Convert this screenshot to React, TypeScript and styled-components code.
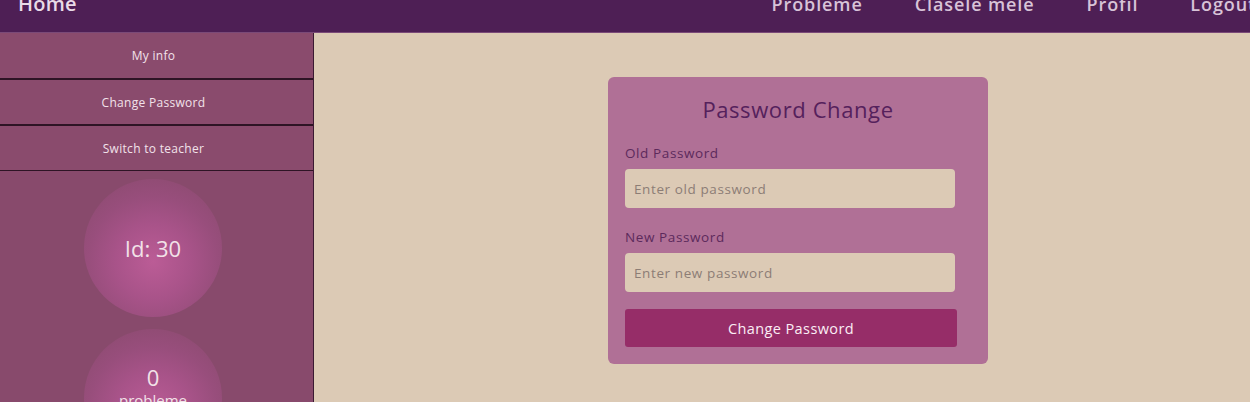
import React from "react";
import styled, { createGlobalStyle } from "styled-components";

const Global = createGlobalStyle`
  html, body { margin: 0; padding: 0; }
  body {
    font-family: "Open Sans", "DejaVu Sans", sans-serif;
    background: #dccab5;
    overflow: hidden;
  }
  * { box-sizing: border-box; }
`;

const Page = styled.div`
  width: 1250px;
  height: 402px;
  display: flex;
  flex-direction: column;
  background: #dccab5;
`;

const Header = styled.header`
  height: 33px;
  flex: none;
  display: flex;
  align-items: center;
  padding: 0 0 24px 18px;
  background: #4e1f55;
  border-bottom: 1px solid #7b4a78;
`;

const Brand = styled.span`
  font-size: 20px;
  font-weight: 600;
  line-height: 24px;
  color: #e9dbe8;
  letter-spacing: 0.2px;
`;

const Nav = styled.nav`
  margin-left: auto;
  display: flex;
  gap: 52px;
  margin-right: -6px;
`;

const NavLink = styled.span`
  font-size: 18px;
  font-weight: 600;
  line-height: 24px;
  color: #d8c3d8;
  letter-spacing: 0.9px;
`;

const Body = styled.div`
  flex: 1;
  display: flex;
  min-height: 0;
`;

const Sidebar = styled.aside`
  width: 314px;
  flex: none;
  background: #884a6c;
  border-right: 1px solid #3b1a33;
  display: flex;
  flex-direction: column;
  overflow: hidden;
`;

const SideButton = styled.div<{ $first?: boolean }>`
  height: 46px;
  flex: none;
  display: flex;
  align-items: center;
  justify-content: center;
  background: #8a4b6d;
  border-bottom: 1px solid #2e1425;
  border-top: ${(p) => (p.$first ? "none" : "1px solid #2e1425")};
  font-size: 12px;
  letter-spacing: 0.3px;
  color: #f2e2ea;
  padding-right: 6px;
`;

const Stats = styled.div`
  display: flex;
  flex-direction: column;
  align-items: center;
  gap: 12px;
  padding-top: 8px;
  padding-right: 7px;
`;

const Bubble = styled.div<{ $pb?: number }>`
  width: 138px;
  height: 138px;
  flex: none;
  border-radius: 50%;
  background: radial-gradient(
    circle at 50% 60%,
    #bb5c96 0%,
    #a85389 35%,
    #984e7c 60%,
    #8d4b71 85%,
    #884a6c 100%
  );
  display: flex;
  flex-direction: column;
  align-items: center;
  justify-content: center;
  padding-bottom: ${(p) => p.$pb ?? 0}px;
  color: #f2e2e8;
`;

const BubbleValue = styled.div`
  font-size: 22px;
  font-weight: 500;
  line-height: 28px;
`;

const BubbleLabel = styled.div`
  font-size: 15px;
  line-height: 18px;
`;

const Main = styled.main`
  flex: 1;
  padding: 44px 0 0 294px;
`;

const Card = styled.div`
  width: 380px;
  height: 287px;
  background: #b07096;
  border-radius: 6px;
  padding: 17px 33px 0 17px;
  display: flex;
  flex-direction: column;
`;

const Title = styled.h2`
  margin: 0 0 20px;
  text-align: center;
  font-size: 22px;
  font-weight: 500;
  letter-spacing: 0.6px;
  line-height: 30px;
  color: #55215c;
  padding-left: 16px;
`;

const Label = styled.label`
  font-size: 13.5px;
  letter-spacing: 0.6px;
  line-height: 18px;
  color: #5c2a5c;
  margin-bottom: 7px;
`;

const Input = styled.input<{ $mb: number }>`
  width: 330px;
  height: 39px;
  border: none;
  border-radius: 4px;
  background: #dccab5;
  padding: 0 9px;
  font-family: inherit;
  font-size: 13.5px;
  letter-spacing: 0.6px;
  color: #333;
  margin-bottom: ${(p) => p.$mb}px;
  &::placeholder { color: #8c7d75; }
  &:focus { outline: none; }
`;

const Submit = styled.button`
  width: 332px;
  height: 38px;
  border: none;
  border-radius: 3px;
  background: #962d68;
  color: #fbeef5;
  font-family: inherit;
  font-size: 14.5px;
  font-weight: 500;
  letter-spacing: 0.4px;
`;

export default function App() {
  return (
    <>
      <Global />
      <Page>
        <Header>
          <Brand>Home</Brand>
          <Nav>
            <NavLink>Probleme</NavLink>
            <NavLink>Clasele mele</NavLink>
            <NavLink>Profil</NavLink>
            <NavLink>Logout</NavLink>
          </Nav>
        </Header>
        <Body>
          <Sidebar>
            <SideButton $first>My info</SideButton>
            <SideButton>Change Password</SideButton>
            <SideButton>Switch to teacher</SideButton>
            <Stats>
              <Bubble>
                <BubbleValue>Id: 30</BubbleValue>
              </Bubble>
              <Bubble $pb={24}>
                <BubbleValue>0</BubbleValue>
                <BubbleLabel>probleme</BubbleLabel>
              </Bubble>
            </Stats>
          </Sidebar>
          <Main>
            <Card>
              <Title>Password Change</Title>
              <Label>Old Password</Label>
              <Input type="password" placeholder="Enter old password" $mb={20} />
              <Label>New Password</Label>
              <Input type="password" placeholder="Enter new password" $mb={17} />
              <Submit>Change Password</Submit>
            </Card>
          </Main>
        </Body>
      </Page>
    </>
  );
}
